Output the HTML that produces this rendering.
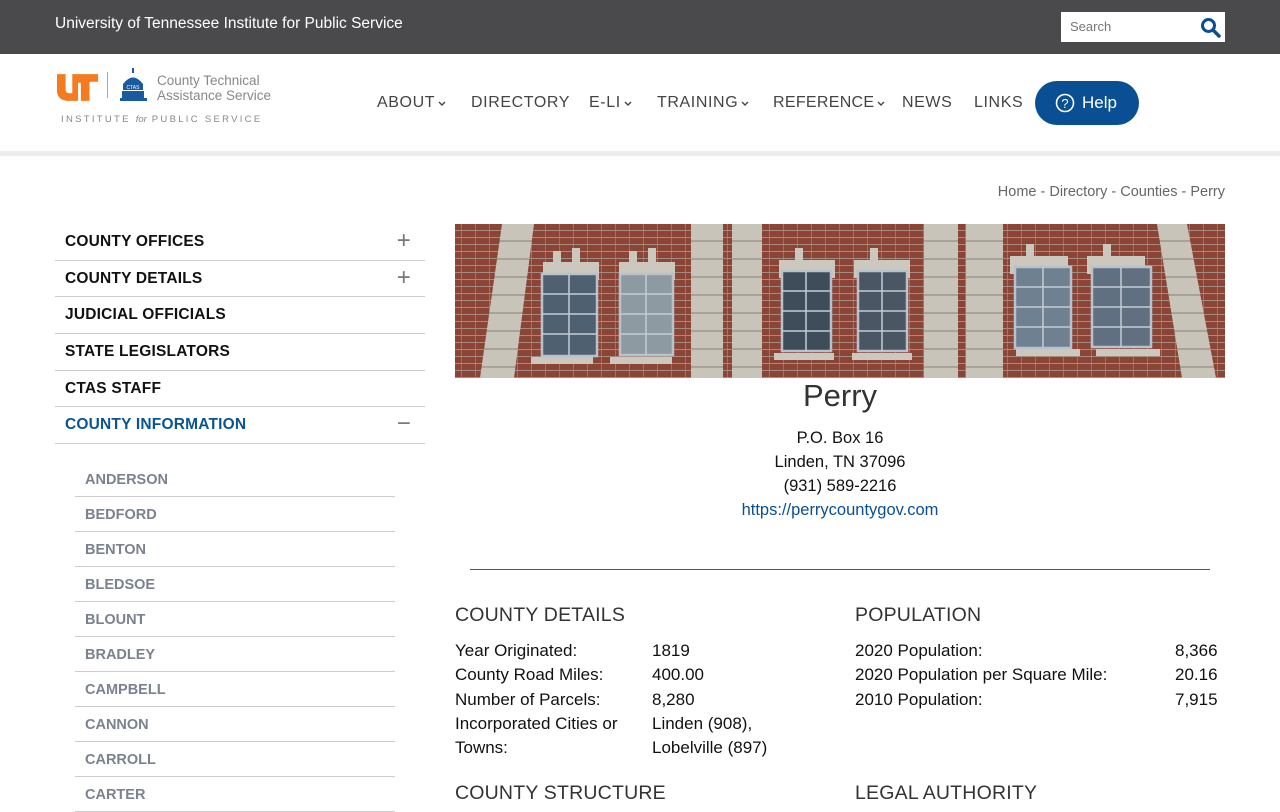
<!DOCTYPE html>
<html><head><meta charset="utf-8">
<style>
*{margin:0;padding:0;box-sizing:border-box}
body{width:1280px;height:800px;overflow:hidden;font-family:"Liberation Sans",sans-serif;background:#fff;color:#111;position:relative}
.top{position:absolute;left:0;top:0;width:1280px;height:54px;background:#4a4a4c}
.top .t{position:absolute;left:55px;top:15px;color:#fff;font-size:15.5px}
.search{position:absolute;left:1061px;top:12px;width:164px;height:30px;background:#fff}
.search span{position:absolute;left:9px;top:7px;font-size:13px;color:#777}
.hdr{position:absolute;top:54px;left:0;width:1280px;height:98px;background:#fff}
.bar{position:absolute;top:151px;left:0;width:1280px;height:5px;background:#ececec}
.nav{position:absolute;top:94px;font-size:16px;color:#444;letter-spacing:.6px}
.nav svg{margin-left:3px;vertical-align:1px}
.help{position:absolute;left:1035px;top:81px;width:104px;height:44px;border-radius:22px;background:#0a4f94;color:#fff;font-size:17px}
.crumb{position:absolute;right:55px;top:184px;font-size:14.5px;color:#666}
.side{position:absolute;left:55px;top:224px;width:370px}
.side .r{height:36.7px;border-bottom:1px solid #ccc;font-weight:bold;font-size:15.5px;padding:9px 10px;position:relative;letter-spacing:.2px}
.side .r .pm{position:absolute;right:14px;top:8px;font-weight:normal;font-size:24px;color:#777;line-height:18px}
.sub{position:absolute;left:75px;top:462px;width:320px}
.sub div{height:35px;border-bottom:1px solid #ccc;font-weight:bold;font-size:14.5px;color:#7a8290;padding:10px 10px}
.title{position:absolute;left:455px;width:770px;top:378px;text-align:center;font-size:31px;color:#333}
.addr{position:absolute;left:455px;width:770px;top:426px;text-align:center;font-size:16.5px;line-height:24px;color:#111}
.addr a{color:#0a4f94;text-decoration:none}
.hr{position:absolute;left:470px;top:569px;width:740px;height:1px;background:#555}
h3{position:absolute;font-weight:normal;font-size:19.5px;color:#333;letter-spacing:.2px}
.tbl{position:absolute;font-size:17px;line-height:24.3px}
.tbl td{padding:0;vertical-align:top}
</style></head><body>
<div class="top"><div class="t">University of Tennessee Institute for Public Service</div>
<div class="search"><span>Search</span>
<svg style="position:absolute;left:139px;top:5px" width="21" height="21" viewBox="0 0 21 21"><circle cx="8.5" cy="8.5" r="6" fill="none" stroke="#0a4f94" stroke-width="3"/><path d="M13 13 L19 19" stroke="#0a4f94" stroke-width="3.5" stroke-linecap="round"/></svg></div></div>
<div class="hdr">
<svg style="position:absolute;left:57px;top:20px" width="43" height="27" viewBox="0 0 45 28"><path d="M0 0h9v16c0 3 2 4 4 4h3V0h27v8h-9v20h-9V9h-3v19h-9C4 28 0 24 0 17z" fill="#f47b20"/></svg>
<div style="position:absolute;left:107px;top:18px;width:1px;height:26px;background:#aaa"></div>
<svg style="position:absolute;left:119px;top:14px" width="29" height="34" viewBox="0 0 29 34"><rect x="13" y="0" width="2" height="5" fill="#1a5aa0"/><path d="M4 16 Q14 3 24 16z" fill="#1a5aa0"/><rect x="4" y="16" width="20" height="6" fill="#1a5aa0"/><text x="14" y="21" font-size="5" fill="#fff" text-anchor="middle" font-family="Liberation Sans">CTAS</text><rect x="3" y="23" width="22" height="7" fill="#1a5aa0"/><rect x="1" y="30" width="27" height="3" fill="#1a5aa0"/></svg>
<div style="position:absolute;left:157px;top:19px;font-size:13.5px;color:#888;line-height:15px">County Technical<br>Assistance Service</div>
<div style="position:absolute;left:61px;top:60px;font-size:9.5px;color:#888;letter-spacing:2.3px">INSTITUTE <i style="letter-spacing:0">for</i> PUBLIC SERVICE</div>
</div>
<div class="bar"></div>
<div class="nav" style="left:377px">ABOUT<svg width="8" height="5" viewBox="0 0 8 5"><path d="M1 1l3 3 3-3" fill="none" stroke="#444" stroke-width="1.4"/></svg></div>
<div class="nav" style="left:471px">DIRECTORY</div>
<div class="nav" style="left:589px">E-LI<svg width="8" height="5" viewBox="0 0 8 5"><path d="M1 1l3 3 3-3" fill="none" stroke="#444" stroke-width="1.4"/></svg></div>
<div class="nav" style="left:657px">TRAINING<svg width="8" height="5" viewBox="0 0 8 5"><path d="M1 1l3 3 3-3" fill="none" stroke="#444" stroke-width="1.4"/></svg></div>
<div class="nav" style="left:773px;letter-spacing:.3px">REFERENCE<svg width="8" height="5" viewBox="0 0 8 5"><path d="M1 1l3 3 3-3" fill="none" stroke="#444" stroke-width="1.4"/></svg></div>
<div class="nav" style="left:902px">NEWS</div>
<div class="nav" style="left:974px">LINKS</div>
<div class="help"><svg style="position:absolute;left:20px;top:12px" width="20" height="20" viewBox="0 0 20 20"><circle cx="10" cy="10" r="8.5" fill="none" stroke="#fff" stroke-width="1.6"/><text x="10" y="15" font-size="13" fill="#fff" text-anchor="middle" font-family="Liberation Sans">?</text></svg><span style="position:absolute;left:47px;top:12px">Help</span></div>
<div class="crumb">Home - Directory - Counties - Perry</div>
<div class="side">
<div class="r">COUNTY OFFICES<span class="pm">+</span></div>
<div class="r">COUNTY DETAILS<span class="pm">+</span></div>
<div class="r">JUDICIAL OFFICIALS</div>
<div class="r">STATE LEGISLATORS</div>
<div class="r">CTAS STAFF</div>
<div class="r" style="color:#0a5494">COUNTY INFORMATION<span class="pm">−</span></div>
</div>
<div class="sub"><div>ANDERSON</div><div>BEDFORD</div><div>BENTON</div><div>BLEDSOE</div><div>BLOUNT</div><div>BRADLEY</div><div>CAMPBELL</div><div>CANNON</div><div>CARROLL</div><div>CARTER</div></div>
<svg style="position:absolute;left:455px;top:224px" width="770" height="154" viewBox="0 0 770 154">
<defs><pattern id="b" width="14" height="7" patternUnits="userSpaceOnUse"><rect width="14" height="7" fill="#8a4536"/><rect x="0" y="6" width="14" height="1" fill="#a88a80"/><rect x="6" y="0" width="1" height="6" fill="#9c7468"/></pattern>
<pattern id="s" width="20" height="18" patternUnits="userSpaceOnUse"><rect width="20" height="18" fill="#c9c4ba"/><rect y="16" width="20" height="2" fill="#a8a298"/></pattern></defs>
<rect width="770" height="154" fill="url(#b)"/>
<g fill="url(#s)"><path d="M47 0h32L59 154H25z"/><rect x="236" y="0" width="32" height="154"/><rect x="277" y="0" width="30" height="154"/><rect x="469" y="0" width="34" height="154"/><rect x="511" y="0" width="37" height="154"/><path d="M702 0h30l29 154h-34z"/></g>
<g fill="#cdc8be"><path d="M88 38h56v18H88z"/><path d="M164 38h56v18h-56z"/><path d="M324 36h56v18h-56z"/><path d="M399 36h56v18h-56z"/><path d="M555 32h58v18h-58z"/><path d="M632 32h58v18h-58z"/>
<rect x="98" y="27" width="8" height="12"/><rect x="117" y="24" width="8" height="14"/><rect x="174" y="27" width="8" height="12"/><rect x="193" y="24" width="8" height="14"/><rect x="340" y="24" width="8" height="14"/><rect x="415" y="24" width="8" height="14"/><rect x="571" y="20" width="8" height="14"/><rect x="648" y="20" width="8" height="14"/>
<rect x="76" y="133" width="62" height="7"/><rect x="155" y="133" width="62" height="7"/><rect x="319" y="129" width="60" height="7"/><rect x="397" y="129" width="60" height="7"/><rect x="561" y="125" width="64" height="7"/><rect x="641" y="125" width="64" height="7"/></g>
<g stroke="#b8c2cc" stroke-width="2.5"><rect x="87" y="50" width="55" height="82" fill="#4f6070"/><rect x="165" y="50" width="53" height="81" fill="#8e9aa2"/><rect x="327" y="47" width="49" height="80" fill="#3f4c5a"/><rect x="403" y="47" width="49" height="80" fill="#4a5664"/><rect x="560" y="43" width="56" height="81" fill="#6f8090"/><rect x="637" y="43" width="59" height="80" fill="#607080"/></g>
<g stroke="#c4ccd4" stroke-width="1.5"><path d="M114 50v82M191 50v81M351 47v80M427 47v80M588 43v81M666 43v80M87 70h55M87 90h55M87 110h55M165 70h53M165 90h53M165 110h53M327 67h49M327 87h49M327 107h49M403 67h49M403 87h49M403 107h49M560 63h56M560 83h56M560 103h56M637 63h59M637 83h59M637 103h59"/></g>
</svg>
<div class="title">Perry</div>
<div class="addr">P.O. Box 16<br>Linden, TN 37096<br>(931) 589-2216<br><a>https://perrycountygov.com</a></div>
<div class="hr"></div>
<h3 style="left:455px;top:604px">COUNTY DETAILS</h3>
<h3 style="left:855px;top:604px">POPULATION</h3>
<table class="tbl" style="left:455px;top:639px" cellspacing="0"><tr><td style="width:197px">Year Originated:</td><td>1819</td></tr><tr><td>County Road Miles:</td><td>400.00</td></tr><tr><td>Number of Parcels:</td><td>8,280</td></tr><tr><td>Incorporated Cities or<br>Towns:</td><td>Linden (908),<br>Lobelville (897)</td></tr></table>
<table class="tbl" style="left:855px;top:639px" cellspacing="0"><tr><td style="width:320px">2020 Population:</td><td>8,366</td></tr><tr><td>2020 Population per Square Mile:</td><td>20.16</td></tr><tr><td>2010 Population:</td><td>7,915</td></tr></table>
<h3 style="left:455px;top:782px">COUNTY STRUCTURE</h3>
<h3 style="left:855px;top:782px">LEGAL AUTHORITY</h3>
</body></html>
